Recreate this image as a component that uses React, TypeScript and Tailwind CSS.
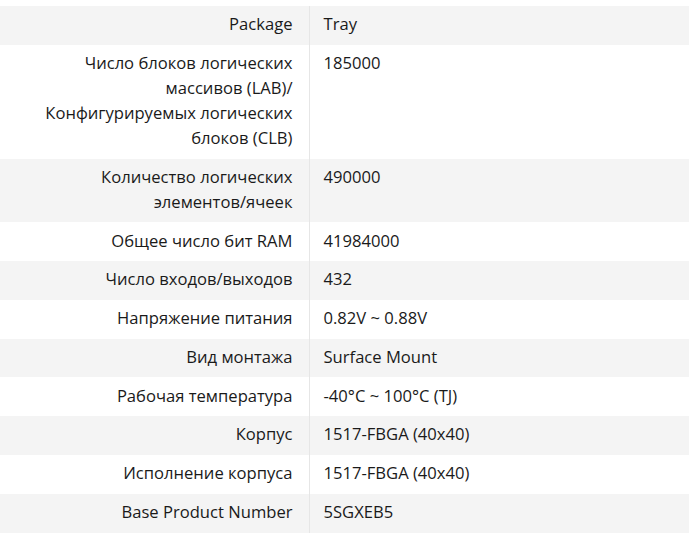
const rows: { label: React.ReactNode; value: string }[] = [
  { label: "Package", value: "Tray" },
  {
    label: (
      <>
        Число блоков логических
        <br />
        массивов (LAB)/
        <br />
        Конфигурируемых логических
        <br />
        блоков (CLB)
      </>
    ),
    value: "185000",
  },
  {
    label: (
      <>
        Количество логических
        <br />
        элементов/ячеек
      </>
    ),
    value: "490000",
  },
  { label: "Общее число бит RAM", value: "41984000" },
  { label: "Число входов/выходов", value: "432" },
  { label: "Напряжение питания", value: "0.82V ~ 0.88V" },
  { label: "Вид монтажа", value: "Surface Mount" },
  { label: "Рабочая температура", value: "-40°C ~ 100°C (TJ)" },
  { label: "Корпус", value: "1517-FBGA (40x40)" },
  { label: "Исполнение корпуса", value: "1517-FBGA (40x40)" },
  { label: "Base Product Number", value: "5SGXEB5" },
];

export default function App() {
  return (
    <div className="w-[689px] h-[546px] bg-white pt-[6px] font-['Open_Sans','Noto_Sans',sans-serif] text-[16.6px] leading-[25px] text-[#1a1a1a]">
      <table className="w-full border-collapse">
        <tbody>
          {rows.map((row, i) => (
            <tr key={i} className={i % 2 === 0 ? "bg-[#f4f4f4]" : "bg-white"}>
              <td className="w-[309px] pr-[16px] pl-2 pt-[5.2px] pb-[8.6px] text-right align-top border-r border-[#e6e6e6]">
                {row.label}
              </td>
              <td className="pl-[14px] pr-2 pt-[5.2px] pb-[8.6px] text-left align-top">{row.value}</td>
            </tr>
          ))}
        </tbody>
      </table>
    </div>
  );
}
